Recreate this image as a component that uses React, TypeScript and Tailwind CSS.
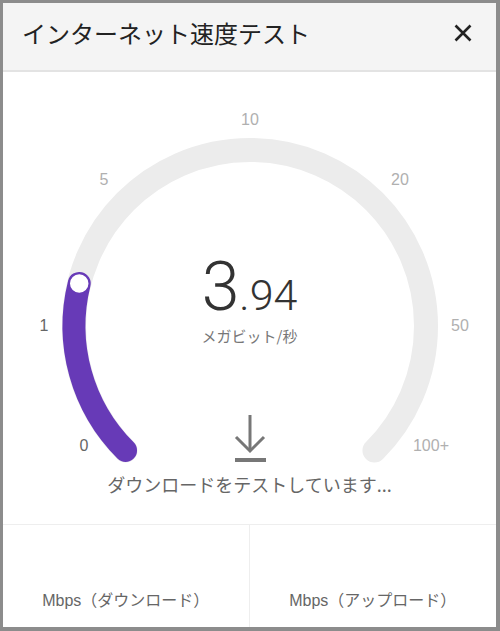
const CX = 247
const CY = 254
const R = 176

function pt(deg: number) {
  const a = (deg * Math.PI) / 180
  return [CX + R * Math.sin(a), CY - R * Math.cos(a)]
}

const ticks = [
  { label: '0', x: 81, y: 373, on: true },
  { label: '1', x: 41, y: 253, on: true },
  { label: '5', x: 101, y: 107, on: false },
  { label: '10', x: 247, y: 47, on: false },
  { label: '20', x: 397, y: 107, on: false },
  { label: '50', x: 457, y: 253, on: false },
  { label: '100+', x: 428, y: 373, on: false },
]

function Gauge() {
  const [sx, sy] = pt(-135)
  const [ex, ey] = pt(135)
  const [kx, ky] = pt(-76)
  return (
    <svg width="493" height="398" viewBox="0 0 493 398" className="block">
      <path
        d={`M ${sx} ${sy} A ${R} ${R} 0 1 1 ${ex} ${ey}`}
        fill="none"
        stroke="#ececec"
        strokeWidth="24"
        strokeLinecap="round"
      />
      <path
        d={`M ${sx} ${sy} A ${R} ${R} 0 0 1 ${kx} ${ky}`}
        fill="none"
        stroke="#673ab7"
        strokeWidth="23"
        strokeLinecap="round"
      />
      <circle cx={kx} cy={ky} r="10" fill="#fff" stroke="#673ab7" strokeWidth="1.5" />
      {ticks.map((t) => (
        <text
          key={t.label}
          x={t.x}
          y={t.y}
          textAnchor="middle"
          dominantBaseline="central"
          fontSize="16"
          fontFamily="'Liberation Sans', Arial, sans-serif"
          fill={t.on ? '#666' : '#b0b0b0'}
        >
          {t.label}
        </text>
      ))}
      {/* download icon */}
      <g stroke="#777" strokeWidth="3" fill="none" strokeLinecap="butt">
        <line x1="247" y1="343" x2="247" y2="379" />
        <polyline points="233,365 247,379 261,365" />
        <line x1="232" y1="388" x2="263" y2="388" strokeWidth="4" />
      </g>
    </svg>
  )
}

export default function App() {
  return (
    <div className="w-[500px] h-[631px] bg-white border-l-[3px] border-t-[3px] border-r-[4px] border-b-[4px] border-[#8c8c8c] flex flex-col font-['Liberation_Sans','Noto_Sans_CJK_JP',sans-serif]">
      <div className="h-[67px] bg-[#f4f4f4] flex items-center justify-between pl-[19px] pr-[24px] pb-[7px] shrink-0">
        <h1 className="text-[24px] text-[#222] font-['Noto_Sans_CJK_JP',sans-serif] leading-none">
          インターネット速度テスト
        </h1>
        <svg width="18" height="18" viewBox="0 0 18 18" aria-label="閉じる">
          <path d="M1.5 1.5 L16.5 16.5 M16.5 1.5 L1.5 16.5" stroke="#222" strokeWidth="2.6" />
        </svg>
      </div>
      <div className="h-[2px] bg-[#e3e3e3] shrink-0" />

      <div className="relative">
        <Gauge />
        <div className="absolute left-0 right-0 top-[181px] flex flex-col items-center">
          <div className="flex items-baseline text-[#333] font-['Roboto',sans-serif] font-light leading-none">
            <span className="text-[68px]">3</span>
            <span className="text-[43px]">.94</span>
          </div>
          <div className="mt-[5px] text-[15px] leading-[20px] text-[#777] font-['Noto_Sans_CJK_JP',sans-serif]">
            メガビット/秒
          </div>
        </div>
      </div>

      <div className="pb-[26px] text-center text-[18px] leading-[28px] text-[#666] font-['Noto_Sans_CJK_JP',sans-serif]">
        ダウンロードをテストしています...
      </div>

      <div className="flex-1 grid grid-cols-2 border-t border-[#eeeeee]">
        <div className="flex items-end justify-center pb-[14px] border-r border-[#eeeeee] text-[16px] leading-[24px] text-[#666]">
          <span>Mbps（ダウンロード）</span>
        </div>
        <div className="flex items-end justify-center pb-[14px] text-[16px] leading-[24px] text-[#666]">
          <span>Mbps（アップロード）</span>
        </div>
      </div>
    </div>
  )
}
